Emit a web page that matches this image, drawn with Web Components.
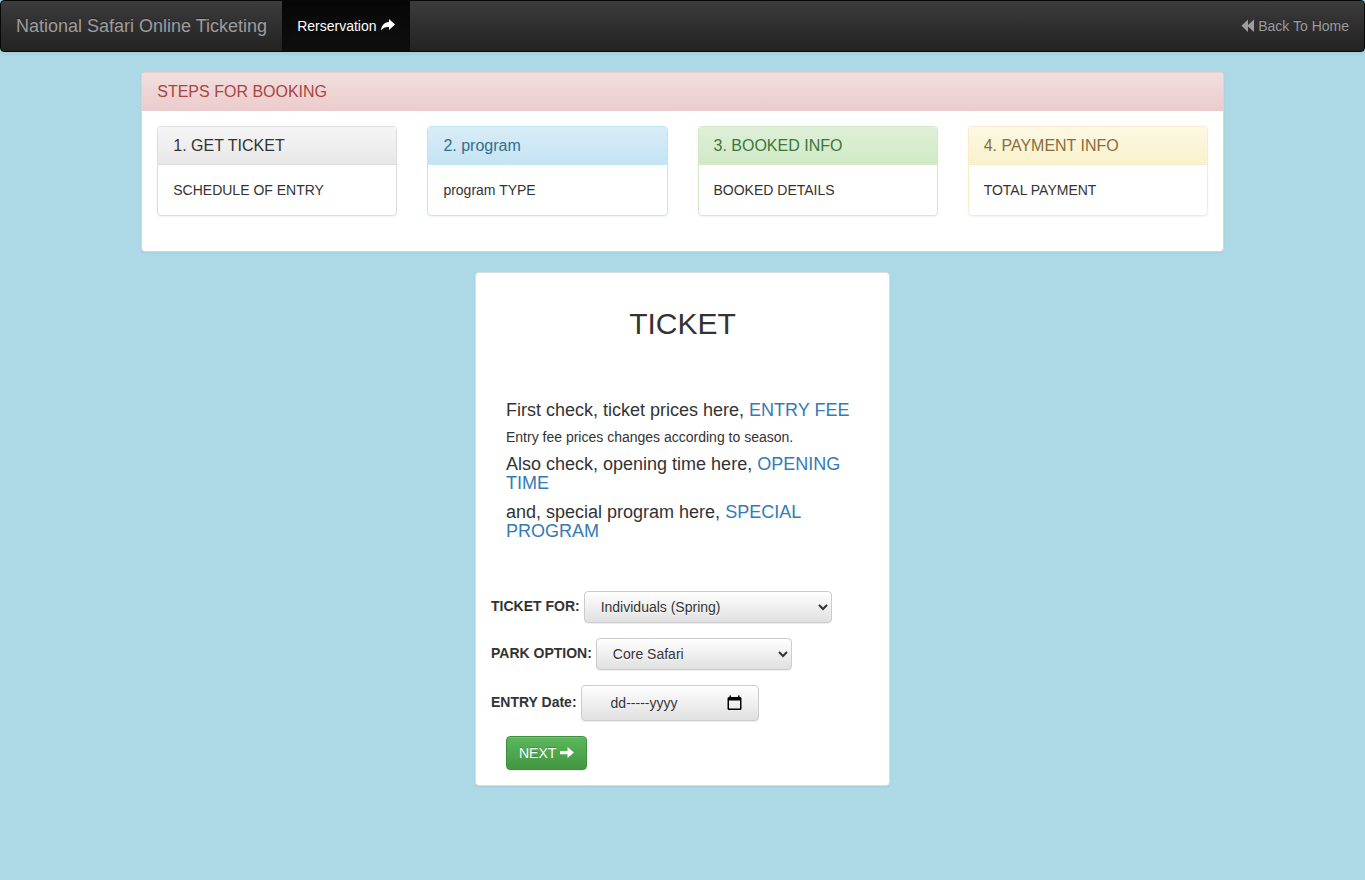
<!DOCTYPE html>
<html lang="en">
<head>
<meta charset="utf-8">
<meta name="viewport" content="width=device-width, initial-scale=1">
<title>National Safari Online Ticketing</title>
<style>
  body { margin: 0; background: #add8e6; color: #333; font: 14px/20px "Liberation Sans", Arial, sans-serif; }
</style>
</head>
<body>
<safari-page></safari-page>

<script>
const define = (name, html) => {
  const template = document.createElement('template');
  template.innerHTML = '<style>*{box-sizing:border-box}</style>' + html;
  customElements.define(name, class extends HTMLElement {
    constructor() {
      super();
      this.attachShadow({ mode: 'open' }).append(template.content.cloneNode(true));
    }
  });
};

define('safari-navbar', `
  <style>
    :host { display: block; }
    nav {
      display: flex; flex-wrap: wrap; min-height: 52px;
      border: 1px solid #080808; border-radius: 4px;
      background: linear-gradient(#3c3c3c, #222);
      box-shadow: 0 1px 5px rgba(0,0,0,.075);
    }
    a {
      display: flex; align-items: center; gap: 4px; padding: 15px;
      color: #9d9d9d; text-decoration: none; text-shadow: 0 -1px 0 rgba(0,0,0,.25);
    }
    .brand { font-size: 18px; }
    .active { color: #fff; background: linear-gradient(#080808, #0f0f0f); box-shadow: inset 0 3px 9px rgba(0,0,0,.25); }
    .home { margin-left: auto; }
    svg { display: block; fill: currentColor; }
  </style>
  <nav>
    <a class="brand" href="#home">National Safari Online Ticketing</a>
    <a class="active" href="#reservation">Rerservation
      <svg width="14" height="14" viewBox="0 0 14 14" aria-hidden="true"><path d="M8 0 14 5.500 8 11V8C4.500 7.700 2.200 8.800 0 11.500 .3 6.500 3.400 3.300 8 3Z"/></svg>
    </a>
    <a class="home" href="#back"><svg width="13" height="14" viewBox="0 0 13 14" aria-hidden="true"><path d="M7 .5V6L13 .5V13L7 7.500V13L.5 6.750Z"/></svg>
      Back To Home</a>
  </nav>`);

define('safari-panel', `
  <style>
    :host {
      display: block; background: #fff; border: 1px solid var(--line, #ddd); border-radius: 4px;
      box-shadow: 0 1px 2px rgba(0,0,0,.05);
      --line: #ddd; --from: #f5f5f5; --to: #e8e8e8; --ink: #333;
    }
    :host([kind="danger"]) { --line: #ebccd1; --from: #f2dede; --to: #ebcccc; --ink: #a94442; }
    :host([kind="info"]) { --line: #bce8f1; --from: #d9edf7; --to: #c4e3f3; --ink: #31708f; }
    :host([kind="success"]) { --line: #d6e9c6; --from: #dff0d8; --to: #d0e9c6; --ink: #3c763d; }
    :host([kind="warning"]) { --line: #faebcc; --from: #fcf8e3; --to: #faf2cc; --ink: #8a6d3b; }
    ::slotted([slot="heading"]) {
      margin: 0; padding: 10px 15px; font-size: 16px; line-height: 17px; font-weight: 400;
      color: var(--ink); background: linear-gradient(var(--from), var(--to));
      border-bottom: 1px solid var(--line); border-radius: 3px 3px 0 0;
    }
    .body { padding: 15px; }
  </style>
  <slot name="heading"></slot>
  <div class="body"><slot></slot></div>`);

define('booking-steps', `
  <style>
    :host { display: block; }
    .steps { display: grid; grid-template-columns: repeat(4, minmax(0, 1fr)); gap: 30px; margin-bottom: 20px; }
    @media (max-width: 900px) { .steps { grid-template-columns: repeat(2, minmax(0, 1fr)); } }
  </style>
  <safari-panel kind="danger">
    <h3 slot="heading">STEPS FOR BOOKING</h3>
    <div class="steps">
      <safari-panel><h3 slot="heading">1. GET TICKET</h3>SCHEDULE OF ENTRY</safari-panel>
      <safari-panel kind="info"><h3 slot="heading">2. program</h3>program TYPE</safari-panel>
      <safari-panel kind="success"><h3 slot="heading">3. BOOKED INFO</h3>BOOKED DETAILS</safari-panel>
      <safari-panel kind="warning"><h3 slot="heading">4. PAYMENT INFO</h3>TOTAL PAYMENT</safari-panel>
    </div>
  </safari-panel>`);

define('ticket-form', `
  <style>
    :host { display: block; }
    h2 { margin: 20px 0 0; font-size: 30px; line-height: 32px; font-weight: 400; text-align: center; }
    .intro { display: grid; gap: 10px; padding: 61px 15px 50px; }
    .intro p { margin: 0; font-size: 18px; line-height: 19px; }
    .intro .note { font-size: 14px; line-height: 15px; }
    .intro a { color: #337ab7; text-decoration: none; }
    form { display: grid; gap: 15px; }
    .row { display: flex; flex-wrap: wrap; align-items: center; gap: 4px; }
    label { font-weight: 700; padding-bottom: 2px; }
    select, .date {
      font: inherit; color: #333; border: 1px solid #ccc; border-radius: 4px; max-width: 100%;
      background: linear-gradient(#fff, #e0e0e0); text-shadow: 0 1px 0 #fff;
      box-shadow: inset 0 1px 0 rgba(255,255,255,.15), 0 1px 1px rgba(0,0,0,.075);
    }
    select { height: 32px; padding: 0 12px; }
    #for { width: 248px; }
    #park { width: 196px; }
    .date { display: flex; align-items: center; justify-content: space-between; width: 178px; height: 36px; padding: 0 16px 0 29px; }
    .date input { flex: 1; min-width: 0; border: 0; padding: 0; background: none; font: inherit; color: inherit; text-shadow: inherit; }
    .date input::placeholder { color: #333; opacity: 1; }
    .date button { border: 0; padding: 0; background: none; color: #000; }
    svg { display: block; fill: currentColor; }
    .next {
      justify-self: start; display: flex; align-items: center; gap: 4px; margin-left: 15px; padding: 6px 12px;
      font: inherit; color: #fff; border: 1px solid #3e8f3e; border-radius: 4px;
      background: linear-gradient(#5cb85c, #419641); text-shadow: 0 -1px 0 rgba(0,0,0,.2);
      box-shadow: inset 0 1px 0 rgba(255,255,255,.15), 0 1px 1px rgba(0,0,0,.075);
    }
  </style>
  <safari-panel>
    <h2>TICKET</h2>
    <div class="intro">
      <p>First check, ticket prices here, <a href="#fee">ENTRY FEE</a></p>
      <p class="note">Entry fee prices changes according to season.</p>
      <p>Also check, opening time here, <a href="#time">OPENING TIME</a></p>
      <p>and, special program here, <a href="#program">SPECIAL PROGRAM</a></p>
    </div>
    <form>
      <div class="row">
        <label for="for">TICKET FOR:</label>
        <select id="for"><option>Individuals (Spring)</option></select>
      </div>
      <div class="row">
        <label for="park">PARK OPTION:</label>
        <select id="park"><option>Core Safari</option></select>
      </div>
      <div class="row">
        <label for="date">ENTRY Date:</label>
        <span class="date">
          <input id="date" type="text" placeholder="dd-----yyyy">
          <button type="button" aria-label="Open calendar"><svg width="15" height="16" viewBox="0 0 15 16"><path fill-rule="evenodd" d="M2.500 .5H4V2H11V.5H12.500V2H13Q14.500 2 14.500 3.500V13.500Q14.500 15 13 15H2Q.5 15 .5 13.500V3.500Q.5 2 2 2H2.500ZM2 5.500V13.500H13V5.500Z"/></svg></button>
        </span>
      </div>
      <button class="next" type="button">NEXT
        <svg width="14" height="14" viewBox="0 0 14 14" aria-hidden="true"><path d="M0 5H7.500V1L14 6.500 7.500 12V8.200H0Z"/></svg>
      </button>
    </form>
  </safari-panel>`);

define('safari-page', `
  <style>
    :host { display: block; }
    main { display: grid; grid-template-columns: repeat(12, minmax(0, 1fr)); row-gap: 20px; padding: 20px 15px; }
    booking-steps { grid-column: 2 / 12; padding: 0 15px; }
    ticket-form { grid-column: 5 / 9; padding: 0 15px; }
    @media (max-width: 900px) { booking-steps, ticket-form { grid-column: 1 / -1; } }
  </style>
  <safari-navbar></safari-navbar>
  <main>
    <booking-steps></booking-steps>
    <ticket-form></ticket-form>
  </main>`);
</script>
</body>
</html>
